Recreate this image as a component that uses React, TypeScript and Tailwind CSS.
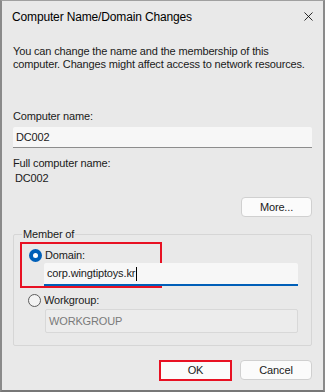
import { X } from 'lucide-react';

function Radio({ checked }: { checked: boolean }) {
  return checked ? (
    <span className="w-[13px] h-[13px] rounded-full bg-[#005fb8] flex items-center justify-center shrink-0">
      <span className="w-[5px] h-[5px] rounded-full bg-white" />
    </span>
  ) : (
    <span className="w-[13px] h-[13px] rounded-full border border-[#5d5d5d] bg-[#f3f3f3] shrink-0" />
  );
}

export default function App() {
  return (
    <div className="w-[325px] h-[392px] bg-[#e9e9e9] border-x-2 border-b-2 border-t border-x-[#8a8a8a] border-b-[#777] border-t-[#a0a0a0] text-[11px] tracking-[-0.15px] text-[#1a1a1a] flex flex-col whitespace-nowrap"
      style={{ fontFamily: '"Segoe UI", "Liberation Sans", Arial, sans-serif' }}>
      <div className="h-[31px] flex items-center justify-between pl-[10px] pr-[7px]">
        <span className="text-[12px] text-black">Computer Name/Domain Changes</span>
        <X size={15} strokeWidth={1.3} className="text-black" />
      </div>

      <div className="flex-1 flex flex-col px-[11px]">
        <p className="mt-[13px] leading-[13px]">
          You can change the name and the membership of this<br />
          computer. Changes might affect access to network resources.
        </p>

        <label className="mt-[39px] leading-[13px]">Computer name:</label>
        <div className="mt-[4px] h-[21px] bg-[#f7f7f7] border-b border-[#8d8d8d] rounded-t-[2px] flex items-center px-[3px]">
          DC002
        </div>

        <span className="mt-[9px] leading-[13px]">Full computer name:</span>
        <span className="mt-[2px] pl-[2px] leading-[13px]">DC002</span>

        <div className="flex justify-end mt-[12px]">
          <button className="w-[71px] h-[20px] bg-[#fbfbfb] border border-[#d0d0d0] rounded-[4px]">
            More...
          </button>
        </div>

        <fieldset className="mt-[11px] h-[118px] border border-[#d6d6d6] rounded-[2px] px-[6px] pb-0">
          <legend className="ml-[2px] px-[1px] leading-[13px]">Member of</legend>
          <div className="mt-[1px] w-[142px] h-[46px] border-2 border-[#e81123] pl-[7px] pt-[5px] flex flex-col">
            <div className="flex items-center gap-[3px]">
              <Radio checked />
              <span className="leading-[13px]">Domain:</span>
            </div>
          </div>
          <div className="-mt-[25px] ml-[24px] w-[254px] h-[23px] bg-[#f7f7f7] border-b-2 border-[#005fb8] rounded-t-[2px] flex items-center pl-[3px] relative">
            corp.wingtiptoys.kr<span className="w-px h-[14px] bg-black ml-px" />
          </div>
          <div className="mt-[8px] ml-[8px] flex items-center gap-[3px]">
            <Radio checked={false} />
            <span className="leading-[13px]">Workgroup:</span>
          </div>
          <div className="mt-[2px] ml-[25px] w-[253px] h-[24px] bg-[#ececec] border border-[#d8d8d8] rounded-[2px] flex items-center pl-[3px] text-[#7a7a7a]">
            WORKGROUP
          </div>
        </fieldset>

        <div className="flex justify-end gap-[8px] mt-[14px]">
          <button className="w-[73px] h-[21px] bg-[#fbfbfb] border-2 border-[#e81123]">
            OK
          </button>
          <button className="w-[72px] h-[20px] bg-[#fbfbfb] border border-[#d0d0d0] rounded-[4px]">
            Cancel
          </button>
        </div>
      </div>
    </div>
  );
}
